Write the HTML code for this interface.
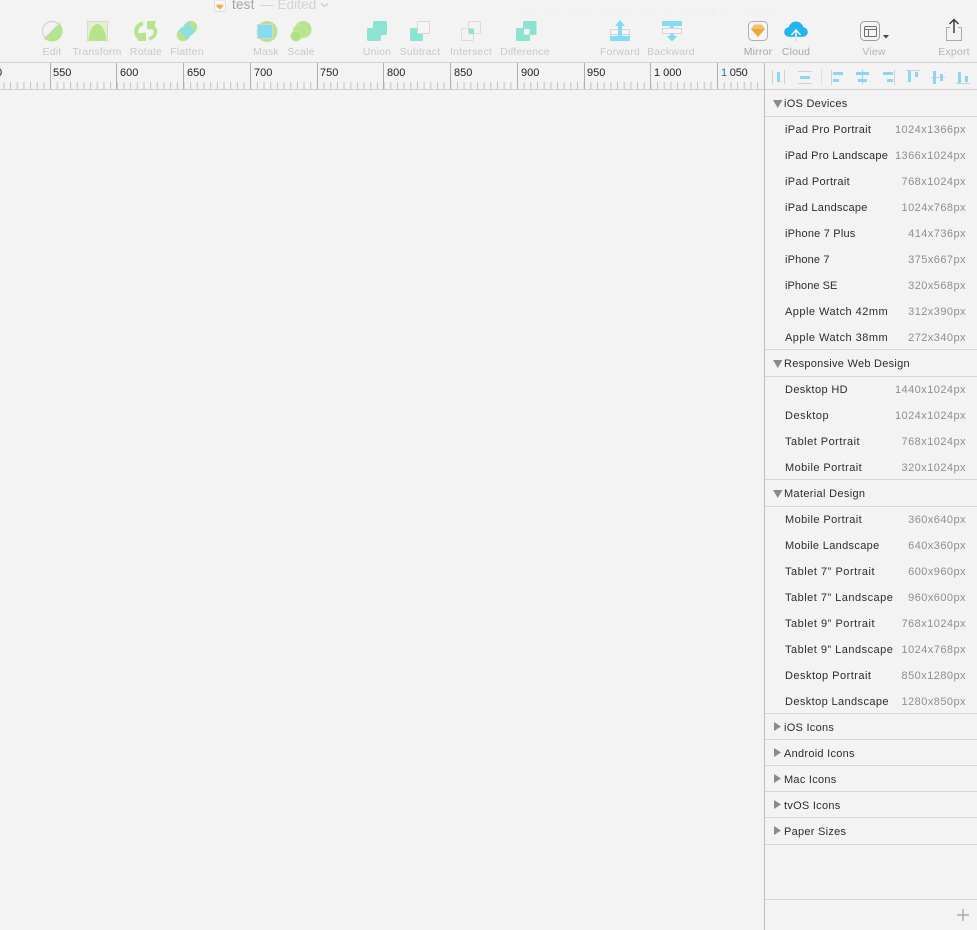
<!DOCTYPE html>
<html><head><meta charset="utf-8">
<style>
html,body{margin:0;padding:0;background:#f3f3f3}
#p{position:relative;width:977px;height:930px;overflow:hidden;background:#f3f3f3;font-family:"Liberation Sans",sans-serif;font-size:11px;color:#2b2b2b}
.t{position:absolute;white-space:nowrap;line-height:14px}
.l{position:absolute;left:785px;margin-top:1px;white-space:nowrap;line-height:14px;letter-spacing:.27px;color:#2c2c2c}
.s{position:absolute;right:11px;margin-top:1px;white-space:nowrap;line-height:14px;letter-spacing:.45px;color:#8e8e8e}
.h{position:absolute;left:784px;margin-top:1px;white-space:nowrap;line-height:14px;letter-spacing:.27px;color:#2c2c2c}
.b{position:absolute;left:765px;width:212px;height:1px;background:#d6d6d6}
.c{position:absolute;top:45px;line-height:14px;font-size:10.5px;letter-spacing:.2px;color:#c9c9c9;white-space:nowrap;transform:translateX(-50%)}
.r{position:absolute;top:66px;line-height:14px;font-size:11px;color:#222;white-space:nowrap}
svg{position:absolute;left:0;top:0}
</style></head><body><div id="p">

<div class="t" style="left:232px;top:-2px;font-size:13.5px;letter-spacing:.2px;color:#a3a3a3">test</div>
<div class="t" style="left:260px;top:-2px;font-size:13.5px;letter-spacing:.1px;color:#d2d2d2">— Edited</div>
<div class="t" style="left:508px;top:2px;font-size:14px;letter-spacing:.3px;color:#f0f0f0">Click up here when you’re ready to restart</div>

<div class="c" style="left:52px">Edit</div>
<div class="c" style="left:97px">Transform</div>
<div class="c" style="left:146px">Rotate</div>
<div class="c" style="left:187px">Flatten</div>
<div class="c" style="left:266px">Mask</div>
<div class="c" style="left:301px">Scale</div>
<div class="c" style="left:377px">Union</div>
<div class="c" style="left:420px">Subtract</div>
<div class="c" style="left:471px">Intersect</div>
<div class="c" style="left:525px">Difference</div>
<div class="c" style="left:620px">Forward</div>
<div class="c" style="left:671px">Backward</div>
<div class="c" style="left:758px;color:#a8a8a8">Mirror</div>
<div class="c" style="left:796px;color:#a8a8a8">Cloud</div>
<div class="c" style="left:874px;color:#b5b5b5">View</div>
<div class="c" style="left:954px;color:#b5b5b5">Export</div>

<svg width="977" height="930" viewBox="0 0 977 930">
<defs>
<pattern id="tk" x="3.4" y="82" width="6.67" height="7" patternUnits="userSpaceOnUse"><rect width="1" height="7" fill="#c2c2c2"/></pattern>
</defs>
<!-- document icon -->
<path d="M214.500 0h9l2 2v9.500h-11z" fill="#f8f8f8" stroke="#dedede"/>
<path d="M217 4.500h5.500l1 1.500-3.700 3.500-3.800-3.500z" fill="#f0b050"/>
<path d="M321 3.500l3.500 3 3.500-3" fill="none" stroke="#c8c8c8" stroke-width="1.200"/>

<!-- Edit -->
<circle cx="52" cy="31" r="9.500" fill="#f3f3f3" stroke="#d2d2d2" stroke-width="1.200"/>
<path d="M59.500 23.500A10 10 0 0 1 44.500 38.500z" fill="#b6e48e"/>
<path d="M44 39L60 23" stroke="#cfcfcf" stroke-width="1"/>
<!-- Transform -->
<rect x="87.500" y="21.500" width="20" height="19" fill="#e6f0c8" stroke="#d8d8d8"/>
<path d="M88 41C89 35 91 25 97.500 24C104 25 106 35 107 41z" fill="#b6e48e"/>
<g fill="#e4e4e4"><rect x="86" y="20" width="3" height="3"/><rect x="106" y="20" width="3" height="3"/><rect x="86" y="39" width="3" height="3"/><rect x="106" y="39" width="3" height="3"/></g>
<!-- Rotate -->
<path d="M143 23.500C135 25 134 35 140 38" fill="none" stroke="#b6e48e" stroke-width="4"/>
<path d="M136.500 33.500L146 32.500V41H138z" fill="#b6e48e"/>
<path d="M150 26C157 27 158 36 149 39" fill="none" stroke="#b6e48e" stroke-width="3.500"/>
<path d="M147 21h8.500v1l-2 7.500L147 29z" fill="#b6e48e"/>
<!-- Flatten -->
<path d="M183 35L191 27" stroke="#b6e48e" stroke-width="12.500" stroke-linecap="round"/>
<path d="M178.500 30.500L186.500 22.500L195.500 31.500L187.500 39.500z" fill="#8ddfe0"/>
<path d="M177.500 31.500L188.500 21.500L191 21L180 32.500z" fill="#8ddfe0"/>
<circle cx="180.500" cy="24" r="3.800" fill="#f3f3f3"/>
<circle cx="193.500" cy="38" r="3.800" fill="#f3f3f3"/>
<!-- Mask -->
<circle cx="267" cy="31.500" r="10.500" fill="#b6e48e"/>
<rect x="257.500" y="24.500" width="15" height="14" fill="#84dcf2" stroke="#d5d5d5"/>
<!-- Scale -->
<circle cx="303" cy="29.500" r="8.500" fill="#b6e48e"/>
<circle cx="300" cy="31.500" r="7" fill="#b6e48e" stroke="#c8ec9f" stroke-width=".8"/>
<circle cx="296" cy="36" r="5.200" fill="#b0e187" stroke="#c8ec9f" stroke-width=".8"/>
<!-- Union -->
<rect x="373" y="21" width="14" height="14" rx="1.500" fill="#8be3d2"/>
<rect x="367" y="28" width="14" height="13" rx="1.500" fill="#8be3d2"/>
<!-- Subtract -->
<rect x="410" y="28" width="13" height="13" rx="1.500" fill="#8be3d2"/>
<rect x="417.500" y="21.500" width="12" height="12" rx="1" fill="#f5f5f5" stroke="#d8d8d8"/>
<!-- Intersect -->
<rect x="468.500" y="21.500" width="12" height="12" rx="1" fill="none" stroke="#dcdcdc"/>
<rect x="461.500" y="28.500" width="12" height="12" rx="1" fill="none" stroke="#dcdcdc"/>
<rect x="469" y="29" width="5" height="5" fill="#8be3d2"/>
<!-- Difference -->
<rect x="523" y="21" width="13.500" height="14" rx="1.500" fill="#8be3d2"/>
<rect x="516" y="28" width="14" height="13" rx="1.500" fill="#8be3d2"/>
<rect x="524" y="29" width="5.500" height="5.500" fill="#f3f3f3"/>
<!-- Forward -->
<rect x="610.500" y="29.500" width="19" height="5" fill="#f5f5f5" stroke="#d5d5d5"/>
<rect x="610" y="36" width="20" height="5" fill="#84dcf2"/>
<path d="M620 20l5 6h-3v11h-4V26h-3z" fill="#84dcf2"/>
<!-- Backward -->
<rect x="662" y="21" width="20" height="5" fill="#84dcf2"/>
<rect x="662.500" y="28.500" width="19" height="5" fill="#f5f5f5" stroke="#d5d5d5"/>
<rect x="670" y="26" width="3.500" height="2" fill="#84dcf2"/>
<path d="M670 33.500h4V36h3.500l-5.500 5.500-5.500-5.500H670z" fill="#84dcf2"/>
<!-- Mirror -->
<rect x="748.500" y="21.500" width="19" height="19" rx="4" fill="#f6f6f6" stroke="#b0b0b0"/>
<path d="M751 29l3.500-4.500h7L765 29l-7 8z" fill="#eca73a"/>
<path d="M754.500 24.500h7L765 29h-14z" fill="#f2c06e"/>
<!-- Cloud -->
<g fill="#22b5f0"><circle cx="796" cy="29" r="7.500"/><circle cx="789" cy="32" r="4.800"/><circle cx="803" cy="32" r="4.800"/><rect x="789" y="30" width="14" height="6.800"/></g>
<path d="M796 37V31M791.500 35l4.500-5 4.500 5" fill="none" stroke="#f5f5f5" stroke-width="1.500"/>
<path d="M796 37v5" stroke="#d8d8d8" stroke-width="1.200"/>
<!-- View -->
<rect x="860.500" y="21.500" width="19" height="19" rx="4" fill="#f5f5f5" stroke="#9e9e9e"/>
<rect x="864.500" y="26.500" width="12" height="10" rx="1" fill="none" stroke="#6d6d6d" stroke-width="1"/>
<path d="M864.500 29.500h12M868.500 29.500V36.500" stroke="#6d6d6d" fill="none"/>
<path d="M883 35h6l-3 3.500z" fill="#444"/>
<!-- Export -->
<path d="M950 27.500h-3a.8.800 0 0 0-.5.500v12.500h15V28a.8.800 0 0 0-.5-.500h-3" fill="none" stroke="#aaaaaa" stroke-width="1"/>
<path d="M954 33V20M949.500 24l4.500-4.500 4.500 4.500" fill="none" stroke="#333" stroke-width="1.400"/>

<!-- bars -->
<rect x="0" y="62" width="977" height="1" fill="#d2d2d2"/>
<rect x="0" y="89" width="977" height="1" fill="#cfcfcf"/>
<rect x="0" y="82" width="765" height="7" fill="url(#tk)"/>
<g fill="#b0b0b0">
<rect x="50" y="63" width="1" height="26"/><rect x="116" y="63" width="1" height="26"/><rect x="183" y="63" width="1" height="26"/><rect x="250" y="63" width="1" height="26"/><rect x="317" y="63" width="1" height="26"/><rect x="383" y="63" width="1" height="26"/><rect x="450" y="63" width="1" height="26"/><rect x="517" y="63" width="1" height="26"/><rect x="584" y="63" width="1" height="26"/><rect x="650" y="63" width="1" height="26"/><rect x="717" y="63" width="1" height="26"/>
</g>
<rect x="764" y="63" width="1" height="867" fill="#bdbdbd"/>

<!-- align icons -->
<g fill="#d0d0d0">
<rect x="772" y="70" width="1" height="14"/><rect x="784" y="70" width="1" height="14"/>
<rect x="798" y="71" width="14" height="1"/><rect x="798" y="83" width="14" height="1"/>
<rect x="821" y="69" width="1" height="17" fill="#e0e0e0"/>
<rect x="831" y="70" width="1" height="15"/>
<rect x="894" y="70" width="1" height="15"/>
<rect x="906" y="70" width="14" height="1"/>
<rect x="931" y="77" width="14" height="1"/>
<rect x="956" y="83" width="14" height="1"/>
</g>
<g fill="#8fd3f5">
<rect x="777" y="72" width="3" height="10"/><rect x="800" y="76" width="10" height="3"/>
<rect x="833" y="72" width="10" height="3"/><rect x="833" y="79" width="6" height="3"/>
<rect x="862" y="70" width="1" height="14"/><rect x="856" y="72" width="13" height="3"/><rect x="858" y="79" width="9" height="3"/>
<rect x="883" y="72" width="10" height="3"/><rect x="887" y="79" width="6" height="3"/>
<rect x="908" y="71" width="3" height="11"/><rect x="915" y="72" width="3" height="5"/>
<rect x="933" y="71" width="3" height="13"/><rect x="940" y="74" width="3" height="7"/>
<rect x="958" y="72" width="3" height="11"/><rect x="965" y="76" width="3" height="6"/>
</g>

<!-- triangles -->
<g fill="#8a8a8a">
<path d="M773 100h9.500l-4.750 8z"/><path d="M773 360h9.500l-4.750 8z"/><path d="M773 490h9.500l-4.750 8z"/>
<path d="M774 722l7 4.500-7 4.500z"/><path d="M774 748l7 4.500-7 4.500z"/><path d="M774 774l7 4.500-7 4.500z"/><path d="M774 800l7 4.500-7 4.500z"/><path d="M774 826l7 4.500-7 4.500z"/>
</g>
<!-- plus -->
<path d="M963 909v12M957 915h12" stroke="#a8a8a8" stroke-width="1.400"/>
</svg>

<div class="r" style="left:-4px">0</div>
<div class="r" style="left:53px">550</div>
<div class="r" style="left:120px">600</div>
<div class="r" style="left:187px">650</div>
<div class="r" style="left:254px">700</div>
<div class="r" style="left:320px">750</div>
<div class="r" style="left:387px">800</div>
<div class="r" style="left:454px">850</div>
<div class="r" style="left:521px">900</div>
<div class="r" style="left:587px">950</div>
<div class="r" style="left:654px">1 000</div>
<div class="r" style="left:721px;letter-spacing:-.2px"><span style="color:#2a6fc0">1</span> 050</div>

<div class="b" style="top:116px"></div>
<div class="b" style="top:349px"></div>
<div class="b" style="top:376px"></div>
<div class="b" style="top:479px"></div>
<div class="b" style="top:506px"></div>
<div class="b" style="top:713px"></div>
<div class="b" style="top:739px"></div>
<div class="b" style="top:765px"></div>
<div class="b" style="top:791px"></div>
<div class="b" style="top:817px"></div>
<div class="b" style="top:844px"></div>
<div class="b" style="top:899px"></div>

<div class="h" style="top:96px">iOS Devices</div>
<div class="l" style="top:122px;letter-spacing:.33px">iPad Pro Portrait</div><div class="s" style="top:122px">1024x1366px</div>
<div class="l" style="top:148px;letter-spacing:.22px">iPad Pro Landscape</div><div class="s" style="top:148px">1366x1024px</div>
<div class="l" style="top:174px;letter-spacing:.35px">iPad Portrait</div><div class="s" style="top:174px">768x1024px</div>
<div class="l" style="top:200px">iPad Landscape</div><div class="s" style="top:200px">1024x768px</div>
<div class="l" style="top:226px;letter-spacing:.2px">iPhone 7 Plus</div><div class="s" style="top:226px">414x736px</div>
<div class="l" style="top:252px;letter-spacing:.15px">iPhone 7</div><div class="s" style="top:252px">375x667px</div>
<div class="l" style="top:278px;letter-spacing:.05px">iPhone SE</div><div class="s" style="top:278px">320x568px</div>
<div class="l" style="top:304px;letter-spacing:.47px">Apple Watch 42mm</div><div class="s" style="top:304px">312x390px</div>
<div class="l" style="top:330px;letter-spacing:.47px">Apple Watch 38mm</div><div class="s" style="top:330px">272x340px</div>
<div class="h" style="top:356px">Responsive Web Design</div>
<div class="l" style="top:382px;letter-spacing:.37px">Desktop HD</div><div class="s" style="top:382px">1440x1024px</div>
<div class="l" style="top:408px;letter-spacing:.55px">Desktop</div><div class="s" style="top:408px">1024x1024px</div>
<div class="l" style="top:434px;letter-spacing:.48px">Tablet Portrait</div><div class="s" style="top:434px">768x1024px</div>
<div class="l" style="top:460px;letter-spacing:.41px">Mobile Portrait</div><div class="s" style="top:460px">320x1024px</div>
<div class="h" style="top:486px;letter-spacing:.33px">Material Design</div>
<div class="l" style="top:512px;letter-spacing:.41px">Mobile Portrait</div><div class="s" style="top:512px">360x640px</div>
<div class="l" style="top:538px;letter-spacing:.33px">Mobile Landscape</div><div class="s" style="top:538px">640x360px</div>
<div class="l" style="top:564px;letter-spacing:.52px">Tablet 7” Portrait</div><div class="s" style="top:564px">600x960px</div>
<div class="l" style="top:590px;letter-spacing:.49px">Tablet 7” Landscape</div><div class="s" style="top:590px">960x600px</div>
<div class="l" style="top:616px;letter-spacing:.52px">Tablet 9” Portrait</div><div class="s" style="top:616px">768x1024px</div>
<div class="l" style="top:642px;letter-spacing:.49px">Tablet 9” Landscape</div><div class="s" style="top:642px">1024x768px</div>
<div class="l" style="top:668px;letter-spacing:.47px">Desktop Portrait</div><div class="s" style="top:668px">850x1280px</div>
<div class="l" style="top:694px;letter-spacing:.39px">Desktop Landscape</div><div class="s" style="top:694px">1280x850px</div>
<div class="h" style="top:720px">iOS Icons</div>
<div class="h" style="top:746px">Android Icons</div>
<div class="h" style="top:772px">Mac Icons</div>
<div class="h" style="top:798px">tvOS Icons</div>
<div class="h" style="top:824px">Paper Sizes</div>

</div></body></html>
